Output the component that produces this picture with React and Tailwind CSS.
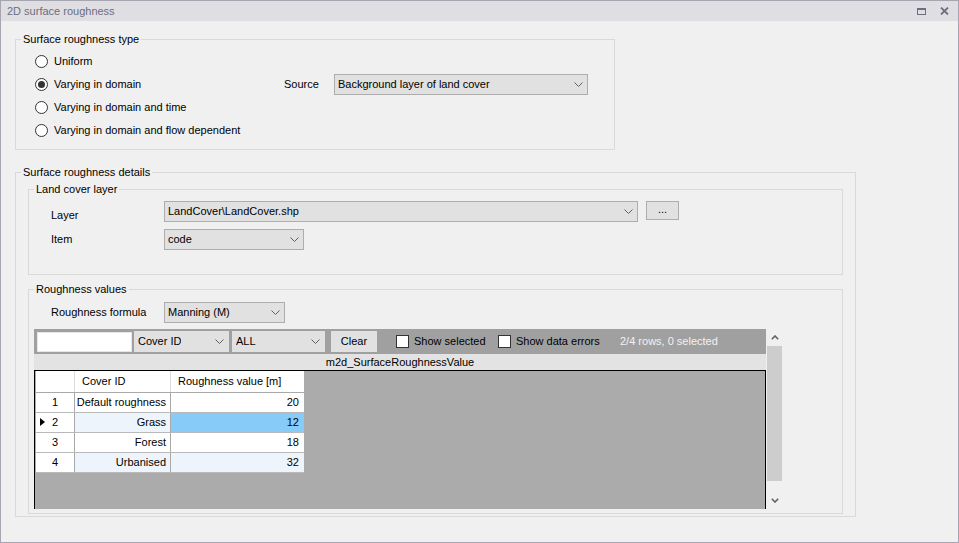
import React from 'react';

const Chevron = ({ color = '#606060' }) => (
  <svg width="9" height="5" viewBox="0 0 9 5" className="shrink-0">
    <polyline points="0.5,0.5 4.5,4.5 8.5,0.5" fill="none" stroke={color} strokeWidth="1" />
  </svg>
);

const Dropdown = ({ text, className = '' }) => (
  <div className={`flex items-center justify-between bg-[#e1e1e1] border border-[#adadad] pl-[3px] pr-[4px] ${className}`}>
    <span className="truncate">{text}</span>
    <Chevron />
  </div>
);

const GroupBox = ({ title, className = '', children }) => (
  <fieldset className={`border border-[#d9d9d9] ${className}`}>
    <legend className="ml-[5px] px-[2px] leading-[14px]">{title}</legend>
    {children}
  </fieldset>
);

const Radio = ({ checked }) => (
  <div className="w-[13px] h-[13px] rounded-full border border-[#333] bg-white flex items-center justify-center shrink-0">
    {checked && <div className="w-[7px] h-[7px] rounded-full bg-[#333]" />}
  </div>
);

const Checkbox = () => <div className="w-[13px] h-[13px] bg-white border border-[#333] shrink-0" />;

const rows = [
  { n: 1, id: 'Default roughness', v: 20 },
  { n: 2, id: 'Grass', v: 12, current: true },
  { n: 3, id: 'Forest', v: 18 },
  { n: 4, id: 'Urbanised', v: 32 },
];

const ScrollArrow = ({ up }) => (
  <svg width="8" height="5" viewBox="0 0 8 5">
    <polyline points={up ? '0.8,4.2 4,1 7.2,4.2' : '0.8,0.8 4,4 7.2,0.8'} fill="none" stroke="#606060" strokeWidth="1.6" />
  </svg>
);

export default function App() {
  return (
    <div className="w-[959px] h-[543px] border border-[#a6a6b0] bg-[#f0f0f0] flex flex-col overflow-hidden text-[11px] text-black font-['Liberation_Sans',Arial,sans-serif]">
      {/* title bar */}
      <div className="h-[20px] shrink-0 bg-[#dfdfe3] flex items-center pl-[6px] pr-[9px] text-[#6d6d80]">
        <span>2D surface roughness</span>
        <div className="ml-auto flex items-center gap-[14px]">
          <div className="w-[9px] h-[7px] border border-[#6e6e80] border-t-2" />
          <svg width="9" height="8" viewBox="0 0 9 8">
            <path d="M1 0.5 L8 7.5 M8 0.5 L1 7.5" stroke="#6e6e80" strokeWidth="1.8" />
          </svg>
        </div>
      </div>

      {/* body */}
      <div className="pl-[14px]">
        <GroupBox title="Surface roughness type" className="mt-[11px] w-[600px] h-[118px]">
          <div className="pt-[4px] pl-[19px]">
            <div className="h-[23px] flex items-center gap-[6px]">
              <Radio />
              <span>Uniform</span>
            </div>
            <div className="h-[23px] flex items-center">
              <div className="w-[249px] flex items-center gap-[6px]">
                <Radio checked />
                <span>Varying in domain</span>
              </div>
              <span className="w-[50px]">Source</span>
              <Dropdown text="Background layer of land cover" className="w-[254px] h-[21px]" />
            </div>
            <div className="h-[23px] flex items-center gap-[6px]">
              <Radio />
              <span>Varying in domain and time</span>
            </div>
            <div className="h-[23px] flex items-center gap-[6px]">
              <Radio />
              <span>Varying in domain and flow dependent</span>
            </div>
          </div>
        </GroupBox>

        <GroupBox title="Surface roughness details" className="mt-[15px] w-[841px] h-[352px]">
          <GroupBox title="Land cover layer" className="mt-[3px] ml-[12px] w-[815px] h-[93px]">
            <div className="pt-[5px] pl-[22px]">
              <div className="flex items-start">
                <span className="w-[113px] pt-[7px] leading-[14px]">Layer</span>
                <Dropdown text="LandCover\LandCover.shp" className="w-[474px] h-[21px]" />
                <div className="ml-[8px] w-[33px] h-[19px] bg-[#e1e1e1] border border-[#adadad] flex items-center justify-center leading-none pb-[3px]">...</div>
              </div>
              <div className="mt-[7px] flex items-center">
                <span className="w-[113px]">Item</span>
                <Dropdown text="code" className="w-[140px] h-[21px]" />
              </div>
            </div>
          </GroupBox>

          <GroupBox title="Roughness values" className="mt-[7px] ml-[12px] w-[815px] h-[232px]">
            <div className="pt-[6px] pl-[22px] flex items-center">
              <span className="w-[113px]">Roughness formula</span>
              <Dropdown text="Manning (M)" className="w-[121px] h-[21px]" />
            </div>

            <div className="mt-[6px] ml-[5px] flex h-[180px]">
              <div className="w-[732px] flex flex-col">
                {/* toolbar */}
                <div className="h-[25px] bg-[#a0a0a0] flex items-center pl-[3px]">
                  <div className="w-[95px] h-[20px] bg-white border border-[#e6e6e6]" />
                  <Dropdown text="Cover ID" className="ml-[2px] w-[95px] h-[21px] !border-[#e1e1e1]" />
                  <Dropdown text="ALL" className="ml-[3px] w-[93px] h-[21px] !border-[#e1e1e1]" />
                  <div className="ml-[6px] w-[46px] h-[21px] bg-[#e1e1e1] flex items-center justify-center">Clear</div>
                  <div className="ml-[19px] w-[102px] flex items-center gap-[5px]">
                    <Checkbox />
                    <span>Show selected</span>
                  </div>
                  <div className="w-[122px] flex items-center gap-[5px]">
                    <Checkbox />
                    <span>Show data errors</span>
                  </div>
                  <span className="text-[#f2f2f2]">2/4 rows, 0 selected</span>
                </div>
                <div className="h-[16px] bg-[#e3e3e3] text-center leading-[16px]">m2d_SurfaceRoughnessValue</div>
                {/* grid */}
                <div className="flex-1 bg-[#ababab] border-l border-t border-r border-black pl-[1px]">
                  <div className="w-[268px] flex flex-col">
                    <div className="flex h-[22px] bg-white border-b border-[#a9a9a9]">
                      <div className="w-[39px] border-r border-[#dcdcdc]" />
                      <div className="w-[96px] border-r border-[#dcdcdc] pl-[7px] flex items-center">Cover ID</div>
                      <div className="w-[133px] pl-[7px] flex items-center">Roughness value [m]</div>
                    </div>
                    {rows.map((r) => {
                      const alt = r.n % 2 === 0 ? 'bg-[#eef4fb]' : 'bg-white';
                      return (
                        <div key={r.n} className="flex h-[20px] border-b border-[#b9b9b9]">
                          <div className="relative w-[39px] bg-white border-r border-[#a9a9a9] flex items-center justify-center">
                            {r.current && (
                              <svg width="5" height="8" viewBox="0 0 5 8" className="absolute left-[4px] top-[5px]">
                                <polygon points="0,0 5,4 0,8" fill="#000" />
                              </svg>
                            )}
                            {r.n}
                          </div>
                          <div className={`w-[96px] border-r border-[#a9a9a9] flex items-center justify-end pr-[4px] ${alt}`}>{r.id}</div>
                          <div className={`w-[133px] flex items-center justify-end pr-[5px] ${r.current ? 'bg-[#87cbf8]' : alt}`}>{r.v}</div>
                        </div>
                      );
                    })}
                  </div>
                </div>
              </div>
              {/* scrollbar */}
              <div className="w-[16px] flex flex-col items-center">
                <div className="h-[17px] flex items-center justify-center pl-[1px]">
                  <ScrollArrow up />
                </div>
                <div className="w-[15px] ml-[1px] h-[135px] bg-[#cdcdcd]" />
                <div className="flex-1" />
                <div className="h-[17px] flex items-center justify-center pl-[1px]">
                  <ScrollArrow />
                </div>
              </div>
            </div>
          </GroupBox>
        </GroupBox>
      </div>
    </div>
  );
}
